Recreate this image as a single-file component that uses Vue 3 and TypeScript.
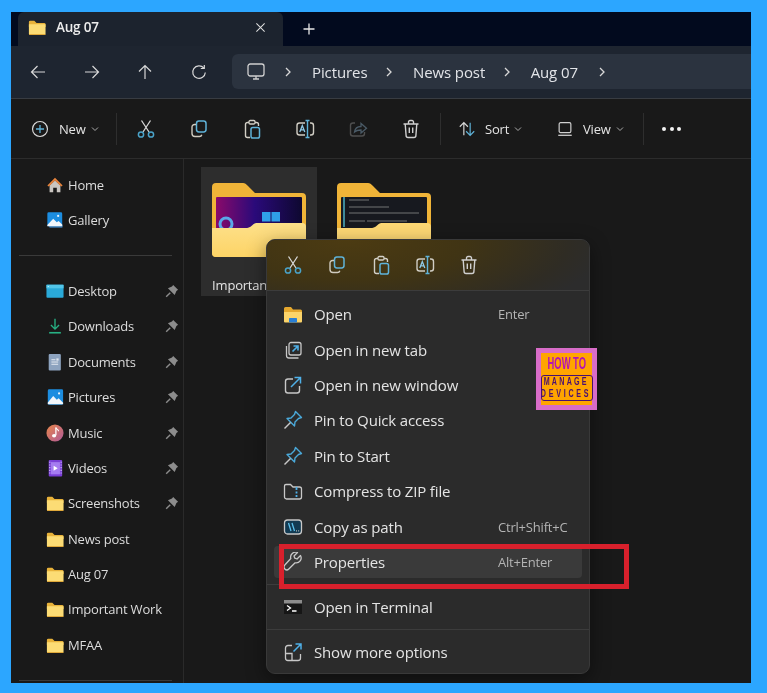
<script setup lang="ts">
const icons: Record<string, string> = {
  cut: '<path d="M5.500 1.500 13 13M14.500 1.500 7 13" stroke="#d6d6d6" stroke-width="1.300" fill="none"/><circle cx="5" cy="15.500" r="2.600" stroke="#4aa3c9" stroke-width="1.500" fill="none"/><circle cx="15" cy="15.500" r="2.600" stroke="#4aa3c9" stroke-width="1.500" fill="none"/>',
  copy: '<rect x="7.500" y="2" width="9.500" height="11" rx="2.400" stroke="#5fb3d9" stroke-width="1.500" fill="none"/><path d="M7 5.500H5.500A2.500 2.500 0 0 0 3 8v6.500A3 3 0 0 0 6 17.500h4.500c1.200 0 2-.7 2.300-1.700" stroke="#cfcbc0" stroke-width="1.400" fill="none"/>',
  paste: '<path d="M7 3.500H5.500A2 2 0 0 0 3.500 5.500v11a2 2 0 0 0 2 2H8" stroke="#d2cfc6" stroke-width="1.400" fill="none"/><path d="M13 3.500h1.500a2 2 0 0 1 2 2V7" stroke="#d2cfc6" stroke-width="1.400" fill="none"/><rect x="7" y="1.500" width="6" height="3.500" rx="1.200" stroke="#d2cfc6" stroke-width="1.300" fill="none"/><rect x="9" y="8.500" width="8.500" height="10.500" rx="1.800" stroke="#5fb3d9" stroke-width="1.500" fill="none"/>',
  rename: '<path d="M10 4H4.500A2.500 2.500 0 0 0 2 6.500v7A2.500 2.500 0 0 0 4.500 16H10M15 4h1A2.500 2.500 0 0 1 18.500 6.500v7A2.500 2.500 0 0 1 16 16h-1" stroke="#d0cdc4" stroke-width="1.400" fill="none"/><path d="M10.500 1.500h4M12.500 1.500v17M10.500 18.500h4" stroke="#5fb3d9" stroke-width="1.400" fill="none"/><path d="M4.800 13 7.300 6.500 9.800 13M5.700 10.800h3.200" stroke="#8fcbe8" stroke-width="1.300" fill="none"/>',
  share: '<path d="M7 4H5A2.500 2.500 0 0 0 2.500 6.500v8A2.500 2.500 0 0 0 5 17h9a2.500 2.500 0 0 0 2.500-2.500V13" stroke="#4f4f4f" stroke-width="1.400" fill="none"/><path d="M6.500 13c.5-3.500 3-5.500 6.500-5.500V4.500l5.500 4.700L13 14v-3c-2.500 0-5 .5-6.500 2z" stroke="#4a5a66" stroke-width="1.300" fill="none"/>',
  trash: '<path d="M2.500 5h15M7.500 4.800V3a1.500 1.500 0 0 1 1.500-1.500h2A1.500 1.500 0 0 1 12.500 3v1.800M4.200 5l.9 11.500A2 2 0 0 0 7.100 18.500h5.800a2 2 0 0 0 2-2L15.800 5M8.300 8.500v5.500M11.700 8.500v5.500" stroke="#d0d0d0" stroke-width="1.400" fill="none"/>',
  home: '<path d="M4 10.500 10 5l6 5.500V18h-4v-5H8v5H4z" fill="#c9c5c0"/><path d="M1.500 10.500 10 2l8.500 8.500-1.600 1.200L10 5 3.100 11.700z" fill="#e8843c"/>',
  gallery: '<rect x="3.500" y="15" width="15" height="3.500" rx="1" fill="#3a74a8"/><rect x="1.500" y="1.500" width="16.500" height="15.500" rx="1.500" fill="#1c8de0"/><path d="M1.500 15.500 8 8.500l4 4 2-1.500 4 4V17h-16.500z" fill="#f2f6fa"/><circle cx="13.500" cy="5.500" r="1.200" fill="#eaf4fb"/>',
  desktop: '<rect x="0.500" y="3" width="19" height="14.500" rx="1" fill="#2aa9d8"/><rect x="0.500" y="3" width="19" height="4" fill="#52c5e8"/><circle cx="2.500" cy="5" r=".6" fill="#dff"/>',
  downloads: '<path d="M10 2v11M5.500 9 10 13.500 14.500 9" stroke="#27b083" stroke-width="1.500" fill="none"/><path d="M3.500 17.500h13" stroke="#27b083" stroke-width="1.800"/>',
  documents: '<rect x="3" y="1" width="13.500" height="18.500" rx="1.200" fill="#8da3bf"/><path d="M6 7.500h4.500M6 10h7.500M6 12.500h7.500" stroke="#e6ebf2" stroke-width="1.100"/><rect x="11.500" y="6" width="2.500" height="2.500" fill="#dfe5ee"/>',
  pictures: '<rect x="2" y="1.500" width="17" height="17" rx="1.500" fill="#1c8de0"/><path d="M2 16l6-7 4 4 2-1.500 5 5v1.500H2z" fill="#f2f6fa"/><circle cx="14.500" cy="6" r="1.200" fill="#eaf4fb"/>',
  music: '<defs><linearGradient id="mg" x1="0" y1="0" x2="1" y2="1"><stop offset="0" stop-color="#e8864a"/><stop offset="1" stop-color="#b05a9a"/></linearGradient></defs><circle cx="10" cy="10" r="9.500" fill="url(#mg)"/><path d="M11 4v8.500" stroke="#fff" stroke-width="1.400"/><path d="M11 4c.5 2 3 2 3 4" stroke="#fff" stroke-width="1.200" fill="none"/><ellipse cx="9" cy="13" rx="2.300" ry="1.900" fill="#fff"/>',
  videos: '<rect x="3" y="1" width="15" height="18.500" rx="1.200" fill="#7a3fd6"/><rect x="5.500" y="3.500" width="10" height="13.500" fill="#a57cf0"/><path d="M8.500 7.500v5.500l4.500-2.700z" fill="#fff"/><path d="M4.200 3v15M16.800 3v15" stroke="#d8c8fa" stroke-width="1.200" stroke-dasharray="1.200 1.800"/>',
  folder: '<path d="M1 4.500A1.500 1.500 0 0 1 2.500 3H7l2.500 2.500H18A1.500 1.500 0 0 1 19.500 7v3H1z" fill="#e8b23a"/><path d="M1 7h18.500v10.500A1.500 1.500 0 0 1 18 19H2.500A1.500 1.500 0 0 1 1 17.500z" fill="#fcdc75"/><path d="M1 17.800H19.500V18A1.500 1.500 0 0 1 18 19H2.500A1.500 1.500 0 0 1 1 17.800z" fill="#e0a93a"/>',
  open: '<path d="M1 4.500A1.500 1.500 0 0 1 2.500 3H8l2 2.500h7.500A1.500 1.500 0 0 1 19 7v2H1z" fill="#e5a82e"/><path d="M1 8h18v9.500a1 1 0 0 1-1 1H2a1 1 0 0 1-1-1z" fill="#fbd46a"/><rect x="6" y="14" width="8" height="4.500" rx=".8" fill="#2a7fd4"/>',
  newtab: '<path d="M3.500 6v9.500a2.500 2.500 0 0 0 2.500 2.500h9.500" stroke="#c8c8c8" stroke-width="1.300" fill="none"/><rect x="6" y="2.500" width="12" height="12.500" rx="2" stroke="#c8c8c8" stroke-width="1.300" fill="none"/><path d="M9.500 11.500 14.500 6.500M10.500 6h4.500v4.500" stroke="#4fb0e8" stroke-width="1.600" fill="none"/>',
  newwin: '<path d="M10 4H5A2.500 2.500 0 0 0 2.500 6.500v9A2.500 2.500 0 0 0 5 18h9a2.500 2.500 0 0 0 2.500-2.500V11" stroke="#c8c8c8" stroke-width="1.400" fill="none"/><path d="M8 12 17 3M11.500 2.500h6v6" stroke="#4fb0e8" stroke-width="1.500" fill="none"/>',
  pin: '<path d="M12.500 1.500 18.500 7.500 15.500 8.500 12 12l-.5 4-7.500-7.500 4-.5L11.500 4.500z" stroke="#4aa9da" stroke-width="1.400" fill="none" stroke-linejoin="round"/><path d="M7.500 12.500 1.500 18.500" stroke="#c8c8c8" stroke-width="1.400"/>',
  zip: '<path d="M1.500 5A1.500 1.500 0 0 1 3 3.500h4.500L10 6h6.500A2 2 0 0 1 18.500 8v8a2 2 0 0 1-2 2H3.500a2 2 0 0 1-2-2z" stroke="#c8c8c8" stroke-width="1.300" fill="none"/><path d="M13.500 6v3M13.500 10.500v2M13.500 14v2" stroke="#4fb0e8" stroke-width="1.800"/>',
  path: '<rect x="1.500" y="3" width="17" height="14" rx="3" stroke="#c8c8c8" stroke-width="1.300" fill="#123a52"/><path d="M5.500 6 8 14M9 6l2.500 8" stroke="#5cc0ec" stroke-width="1.300"/><path d="M13 13.800h.8M15.300 13.800h.8" stroke="#d8d8d8" stroke-width="1.200"/>',
  wrench: '<path d="M17.500 3.500 14 7l-2.200-.8L11 4l3.500-3.500A5 5 0 0 0 7.800 6.500L1.800 13a2.800 2.800 0 0 0 4 4l6.300-6.200A5 5 0 0 0 17.500 3.500z" stroke="#c8c8c8" stroke-width="1.300" fill="none" stroke-linejoin="round"/>',
  terminal: '<rect x="1" y="3" width="18" height="14" fill="#161616"/><rect x="1" y="3" width="18" height="3.500" fill="#8c8c8c"/><path d="M4 8.500 7.500 11 4 13.500" stroke="#fff" stroke-width="1.300" fill="none"/><path d="M9 14h4.500" stroke="#fff" stroke-width="1.300"/>',
  more: '<path d="M9 3.500H5A2.500 2.500 0 0 0 2.500 6v10A2.500 2.500 0 0 0 5 18.500h10a2.500 2.500 0 0 0 2.500-2.500v-4" stroke="#c8c8c8" stroke-width="1.300" fill="none"/><path d="M2.500 11.500H9v7" stroke="#c8c8c8" stroke-width="1.300" fill="none"/><path d="M10.500 9.500 17.500 2.500M12.500 2h5.500v5.500" stroke="#4fb0e8" stroke-width="1.500" fill="none"/>',
}

const crumbs = ['Pictures', 'News post', 'Aug 07']
const quick = ['cut', 'copy', 'paste', 'rename']

const topNav = [
  { label: 'Home', icon: 'home' },
  { label: 'Gallery', icon: 'gallery' },
]
const places = [
  { label: 'Desktop', icon: 'desktop', pin: true },
  { label: 'Downloads', icon: 'downloads', pin: true },
  { label: 'Documents', icon: 'documents', pin: true },
  { label: 'Pictures', icon: 'pictures', pin: true },
  { label: 'Music', icon: 'music', pin: true },
  { label: 'Videos', icon: 'videos', pin: true },
  { label: 'Screenshots', icon: 'folder', pin: true },
  { label: 'News post', icon: 'folder', pin: false },
  { label: 'Aug 07', icon: 'folder', pin: false },
  { label: 'Important Work', icon: 'folder', pin: false },
  { label: 'MFAA', icon: 'folder', pin: false },
]
const menuMain = [
  { label: 'Open', icon: 'open', key: 'Enter' },
  { label: 'Open in new tab', icon: 'newtab', key: '' },
  { label: 'Open in new window', icon: 'newwin', key: '' },
  { label: 'Pin to Quick access', icon: 'pin', key: '' },
  { label: 'Pin to Start', icon: 'pin', key: '' },
  { label: 'Compress to ZIP file', icon: 'zip', key: '' },
  { label: 'Copy as path', icon: 'path', key: 'Ctrl+Shift+C' },
  { label: 'Properties', icon: 'wrench', key: 'Alt+Enter', active: true },
]
</script>

<template>
  <div class="page">
    <div class="window">
      <div class="tabbar">
        <div class="tab">
          <svg class="ic18" viewBox="0 0 20 20" v-html="icons.folder"></svg>
          <span class="tab-title">Aug 07</span>
          <svg class="tab-x" viewBox="0 0 12 12"><path d="M1.500 1.500l9 9M10.500 1.500l-9 9" stroke="#e0e0e0" stroke-width="1.100"/></svg>
        </div>
        <svg class="tab-plus" viewBox="0 0 12 12"><path d="M6 .5v11M.5 6h11" stroke="#e8e8e8" stroke-width="1.300"/></svg>
      </div>

      <div class="addressbar">
        <div class="navs">
          <svg class="nav" viewBox="0 0 16 16"><path d="M15 8H1.500M7.500 2 1.500 8l6 6" stroke="#d8d8d8" stroke-width="1.200" fill="none"/></svg>
          <svg class="nav" viewBox="0 0 16 16"><path d="M1 8h13.500M8.500 2l6 6-6 6" stroke="#d8d8d8" stroke-width="1.200" fill="none"/></svg>
          <svg class="nav" viewBox="0 0 16 16"><path d="M8 15V1.500M2 7.500l6-6 6 6" stroke="#d8d8d8" stroke-width="1.200" fill="none"/></svg>
          <svg class="nav" viewBox="0 0 16 16"><path d="M12.800 4A6.300 6.300 0 1 0 14.300 8.500" stroke="#d8d8d8" stroke-width="1.200" fill="none"/><path d="M13.300 1v3.500H9.800" stroke="#d8d8d8" stroke-width="1.200" fill="none"/></svg>
        </div>
        <div class="crumbs">
          <svg class="monitor" viewBox="0 0 18 18"><rect x="1" y="1" width="16" height="12" rx="2.200" stroke="#d0d0d0" stroke-width="1.300" fill="none"/><path d="M6 16h6M9 13v3" stroke="#d0d0d0" stroke-width="1.300"/></svg>
          <svg class="chev" viewBox="0 0 8 12"><path d="M2 2l4 4-4 4" stroke="#d8d8d8" stroke-width="1.300" fill="none"/></svg>
          <template v-for="c in crumbs" :key="c">
            <span class="crumb">{{ c }}</span>
            <svg class="chev" viewBox="0 0 8 12"><path d="M2 2l4 4-4 4" stroke="#d8d8d8" stroke-width="1.300" fill="none"/></svg>
          </template>
        </div>
      </div>

      <div class="toolbar">
        <div class="tb-text new">
          <svg class="ic18" viewBox="0 0 20 20"><circle cx="10" cy="10" r="8.300" stroke="#d8d8d8" stroke-width="1.300" fill="none"/><path d="M10 5.500v9M5.500 10h9" stroke="#5fb3d9" stroke-width="1.400"/></svg>
          <span>New</span>
          <svg class="caret" viewBox="0 0 8 6"><path d="M1 1.500l3 3 3-3" stroke="#aaa" fill="none"/></svg>
        </div>
        <i class="tb-sep"></i>
        <div class="tb-icons">
          <svg v-for="n in ['cut','copy','paste','rename','share','trash']" :key="n" class="ic20" viewBox="0 0 20 20" v-html="icons[n]"></svg>
        </div>
        <i class="tb-sep"></i>
        <div class="tb-text sort">
          <svg class="ic18" viewBox="0 0 20 20"><path d="M6.500 17V3M2 7.500l4.500-4.500L11 7.500" stroke="#d8d8d8" stroke-width="1.300" fill="none"/><path d="M13.500 3v14M9 12.500l4.500 4.500 4.500-4.500" stroke="#5fb3d9" stroke-width="1.300" fill="none"/></svg>
          <span>Sort</span>
          <svg class="caret" viewBox="0 0 8 6"><path d="M1 1.500l3 3 3-3" stroke="#aaa" fill="none"/></svg>
        </div>
        <div class="tb-text view">
          <svg class="ic18" viewBox="0 0 20 20"><rect x="3.500" y="3" width="13" height="11" rx="1.500" stroke="#d0d0d0" stroke-width="1.300" fill="none"/><path d="M2.500 17h15" stroke="#d0d0d0" stroke-width="1.400"/></svg>
          <span>View</span>
          <svg class="caret" viewBox="0 0 8 6"><path d="M1 1.500l3 3 3-3" stroke="#aaa" fill="none"/></svg>
        </div>
        <i class="tb-sep"></i>
        <div class="dots"><i></i><i></i><i></i></div>
      </div>

      <div class="body">
        <aside class="sidebar">
          <div v-for="r in topNav" :key="r.label" class="side-row">
            <svg class="ic18" viewBox="0 0 20 20" v-html="icons[r.icon]"></svg>
            <span>{{ r.label }}</span>
          </div>
          <hr class="side-div" />
          <div v-for="r in places" :key="r.label" class="side-row">
            <svg class="ic18" viewBox="0 0 20 20" v-html="icons[r.icon]"></svg>
            <span>{{ r.label }}</span>
            <svg v-if="r.pin" class="side-pin" viewBox="0 0 12 12"><path d="M7 .8 11.200 5 9.800 6 8.300 9.500 2.500 3.700 6 2.200z" fill="#8c8c8c"/><path d="M4.500 7.500 1 11" stroke="#8c8c8c" stroke-width="1.200"/></svg>
          </div>
          <hr class="side-div" />
        </aside>

        <main class="files">
          <div class="tile selected">
            <svg class="big-folder" viewBox="0 0 94 74">
              <defs>
                <linearGradient id="pv" x1="0" y1="0" x2="1" y2="0"><stop offset="0" stop-color="#8a0a6a"/><stop offset=".45" stop-color="#2a0a7a"/><stop offset="1" stop-color="#0e0830"/></linearGradient>
                <linearGradient id="fr" x1="0" y1="0" x2="0" y2="1"><stop offset="0" stop-color="#fde08a"/><stop offset="1" stop-color="#fdd466"/></linearGradient>
              </defs>
              <path d="M0 4a4 4 0 0 1 4-4h27c2 0 3 1 5 3l7 7h47a4 4 0 0 1 4 4v56a4 4 0 0 1-4 4H4a4 4 0 0 1-4-4z" fill="#f0b438"/>
              <rect x="4" y="14" width="86" height="34" rx="1" fill="url(#pv)"/>
              <rect x="50" y="29" width="8.500" height="9.500" fill="#2f9fe8"/><rect x="59.500" y="29" width="8.500" height="9.500" fill="#2f9fe8"/>
              <circle cx="14" cy="41" r="6" stroke="#5aa8e8" stroke-width="3" fill="none"/>
              <path d="M0 45h33c3 0 5-.5 7-2.500s3-2.500 6-2.500h44a4 4 0 0 1 4 4v26a4 4 0 0 1-4 4H4a4 4 0 0 1-4-4z" fill="url(#fr)"/>
            </svg>
            <span class="tile-name">Important Work</span>
          </div>
          <div class="tile">
            <svg class="big-folder" viewBox="0 0 94 74">
              <path d="M0 4a4 4 0 0 1 4-4h27c2 0 3 1 5 3l7 7h47a4 4 0 0 1 4 4v56a4 4 0 0 1-4 4H4a4 4 0 0 1-4-4z" fill="#f0b438"/>
              <rect x="4" y="14" width="86" height="34" rx="1" fill="#17191f"/>
              <rect x="6" y="14" width="2" height="30" fill="#3f8a98"/>
              <path d="M12 17h20M12 24h40M12 30h70M12 38h16M30 38h40" stroke="#8a8a8a" stroke-width=".8"/>
              <path d="M0 45h33c3 0 5-.5 7-2.500s3-2.500 6-2.500h44a4 4 0 0 1 4 4v26a4 4 0 0 1-4 4H4a4 4 0 0 1-4-4z" fill="#fdd874"/>
            </svg>
          </div>
        </main>
      </div>

      <div class="menu">
        <div class="menu-top">
          <svg v-for="n in quick" :key="n" class="ic20" viewBox="0 0 20 20" v-html="icons[n]"></svg>
          <svg class="ic20" viewBox="0 0 20 20" v-html="icons.trash"></svg>
        </div>
        <div class="menu-main">
          <div v-for="m in menuMain" :key="m.label" class="mi" :class="{ active: m.active }">
            <svg class="ic20" viewBox="0 0 20 20" v-html="icons[m.icon]"></svg>
            <span class="mi-label">{{ m.label }}</span>
            <span v-if="m.key" class="mi-key">{{ m.key }}</span>
          </div>
        </div>
        <hr class="menu-div" />
        <div class="mi">
          <svg class="ic20" viewBox="0 0 20 20" v-html="icons.terminal"></svg>
          <span class="mi-label">Open in Terminal</span>
        </div>
        <hr class="menu-div" />
        <div class="mi">
          <svg class="ic20" viewBox="0 0 20 20" v-html="icons.more"></svg>
          <span class="mi-label">Show more options</span>
        </div>
      </div>

      <div class="logo">
        <div class="logo-how">HOW TO</div>
        <div class="logo-box">
          <span class="l1">MANAGE</span>
          <span class="l2">DEVICES</span>
        </div>
      </div>

      <div class="highlight"></div>
    </div>
  </div>
</template>

<style>
html, body { margin: 0; background: #2ca6ff; }
</style>

<style scoped>
.page {
  width: 767px;
  height: 693px;
  box-sizing: border-box;
  padding: 12px 16px 10px 11px;
  background: #2ca6ff;
  font-family: "Open Sans", "Noto Sans", sans-serif;
  color: #e4e4e4;
  overflow: hidden;
}
.window {
  position: relative;
  width: 740px;
  height: 671px;
  background: #191919;
  display: flex;
  flex-direction: column;
  overflow: hidden;
  filter: blur(0.35px);
}
.ic18 { width: 18px; height: 18px; flex: none; }
.ic20 { width: 20px; height: 20px; flex: none; }

.tabbar {
  height: 34px;
  flex: none;
  background: #020a1e;
  display: flex;
  align-items: stretch;
  padding-left: 7px;
}
.tab {
  width: 265px;
  background: #1c232e;
  border-radius: 6px 6px 0 0;
  display: flex;
  align-items: center;
  padding: 0 17px 4px 10px;
  box-sizing: border-box;
}
.tab-title { margin-left: 10px; font-size: 13.500px; font-weight: 600; color: #ececec; letter-spacing: -0.2px; }
.tab-x { width: 11px; height: 11px; margin-left: auto; }
.tab-plus { width: 12px; height: 12px; margin: 11px 0 0 20px; }

.addressbar {
  height: 52px;
  flex: none;
  background: #1e2530;
  border-bottom: 1px solid #383c42;
  display: flex;
  align-items: center;
}
.navs { width: 221px; flex: none; display: flex; padding-left: 19px; box-sizing: border-box; gap: 37.500px; }
.nav { width: 16px; height: 16px; flex: none; }
.crumbs {
  flex: 1;
  height: 35px;
  margin-top: -1px;
  background: #2b333f;
  border-radius: 6px 0 0 6px;
  display: flex;
  align-items: center;
  padding-left: 15px;
}
.monitor { width: 18px; height: 18px; margin-right: 19px; flex: none; }
.chev { width: 8px; height: 12px; margin-right: 20px; flex: none; }
.chev:last-child { margin-left: 3px; }
.crumb { font-size: 15px; margin-right: 17.500px; color: #e2e4e8; letter-spacing: -0.1px; }

.toolbar {
  height: 59px;
  flex: none;
  background: #191919;
  border-bottom: 1px solid #2c2c2c;
  display: flex;
  align-items: center;
  font-size: 13px;
}
.tb-text { display: flex; align-items: center; color: #e4e4e4; }
.tb-text span { letter-spacing: -0.2px; }
.new { margin-left: 20px; gap: 10px; width: 85px; }
.new .caret { margin-left: -5px; }
.sort { margin-left: 17px; gap: 9px; width: 98px; }
.view { gap: 9px; width: 87px; }
.caret { width: 8px; height: 6px; margin-left: -4px; }
.tb-sep { width: 1px; height: 32px; background: #2e2e2e; flex: none; }
.tb-icons { display: flex; gap: 33px; margin-left: 19px; width: 304px; }
.dots { display: flex; gap: 3.500px; margin-left: 18px; }
.dots i { width: 4px; height: 4px; border-radius: 50%; background: #f2f2f2; }

.body { flex: 1; display: flex; min-height: 0; }
.sidebar {
  width: 172px;
  flex: none;
  border-right: 1px solid #2a2a2a;
  padding-top: 8px;
}
.side-row {
  height: 35.400px;
  display: flex;
  align-items: center;
  padding: 0 4px 0 35px;
  gap: 4px;
  font-size: 13px;
  color: #dcdcdc;
  letter-spacing: -0.2px;
}
.side-pin { width: 14px; height: 14px; margin-left: auto; }
.side-div { border: 0; border-top: 1px solid #3a3a3a; margin: 17px 11px 17.500px 8px; }

.files { flex: 1; display: flex; padding: 8px 0 0 17px; gap: 9px; align-items: flex-start; }
.tile {
  width: 116px;
  height: 129px;
  box-sizing: border-box;
  padding-top: 16px;
  display: flex;
  flex-direction: column;
  align-items: center;
}
.tile.selected { background: #2d2d2d; }
.big-folder { width: 94px; height: 74px; flex: none; }
.tile-name {
  font-size: 13px;
  letter-spacing: -0.2px;
  color: #e2e2e2;
  margin-top: 19px;
  white-space: nowrap;
}

.menu {
  position: absolute;
  left: 255px;
  top: 227px;
  width: 324px;
  height: 435px;
  box-sizing: border-box;
  background: #2b2b2b;
  border: 1px solid #393939;
  border-radius: 9px;
  overflow: hidden;
  display: flex;
  flex-direction: column;
  box-shadow: 0 6px 20px rgba(0, 0, 0, .45);
}
.menu-top {
  height: 51px;
  flex: none;
  box-sizing: border-box;
  border-bottom: 1px solid #3c3c3c;
  background: radial-gradient(ellipse 260px 90px at 25% 0, #4c3b12 0, #403414 45%, #2f2c24 85%, #2c2c2c 100%), #2c2c2c;
  display: flex;
  align-items: center;
  padding-left: 16px;
  gap: 24px;
}
.menu-main { padding-top: 5.500px; }
.mi {
  height: 35.400px;
  display: flex;
  align-items: center;
  padding: 0 16px;
  font-size: 15px;
  color: #e4e4e4;
  letter-spacing: -0.15px;
}
.mi-label { margin-left: 11px; }
.mi-key { margin-left: auto; width: 75px; font-size: 13px; color: #b4b4b4; letter-spacing: -0.2px; white-space: nowrap; }
.mi.active { height: 31.400px; background: #3a3a3a; border-radius: 4px; margin: 2px 7px; padding: 0 9px; }
.menu-div { border: 0; border-top: 1px solid #3c3c3c; margin: 4.500px 0 4px; }

.logo {
  position: absolute;
  left: 525px;
  top: 336px;
  width: 61px;
  height: 62px;
  box-sizing: border-box;
  border: 5px solid #d86cc8;
  background: #ffa500;
  display: flex;
  flex-direction: column;
  align-items: center;
  font-family: "Liberation Sans", sans-serif;
  font-weight: 700;
}
.logo-how { font-size: 16.500px; line-height: 17px; margin-top: 2px; color: #b414b4; transform: scaleX(.57); white-space: nowrap; }
.logo-box {
  margin-top: 3px;
  width: 52px;
  height: 26px;
  box-sizing: border-box;
  border: 1.500px solid #4a1070;
  border-radius: 3px;
  display: flex;
  flex-direction: column;
  align-items: center;
  color: #4a1070;
  font-size: 10.500px;
  line-height: 11.500px;
  white-space: nowrap;
}
.l1 { transform: scale(.68, 1.080); letter-spacing: 3.300px; }
.l2 { transform: scale(.68, 1.080); letter-spacing: 4px; }

.highlight {
  position: absolute;
  left: 268px;
  top: 532px;
  width: 350px;
  height: 45px;
  box-sizing: border-box;
  border: 5px solid #d8202c;
  pointer-events: none;
}
</style>
